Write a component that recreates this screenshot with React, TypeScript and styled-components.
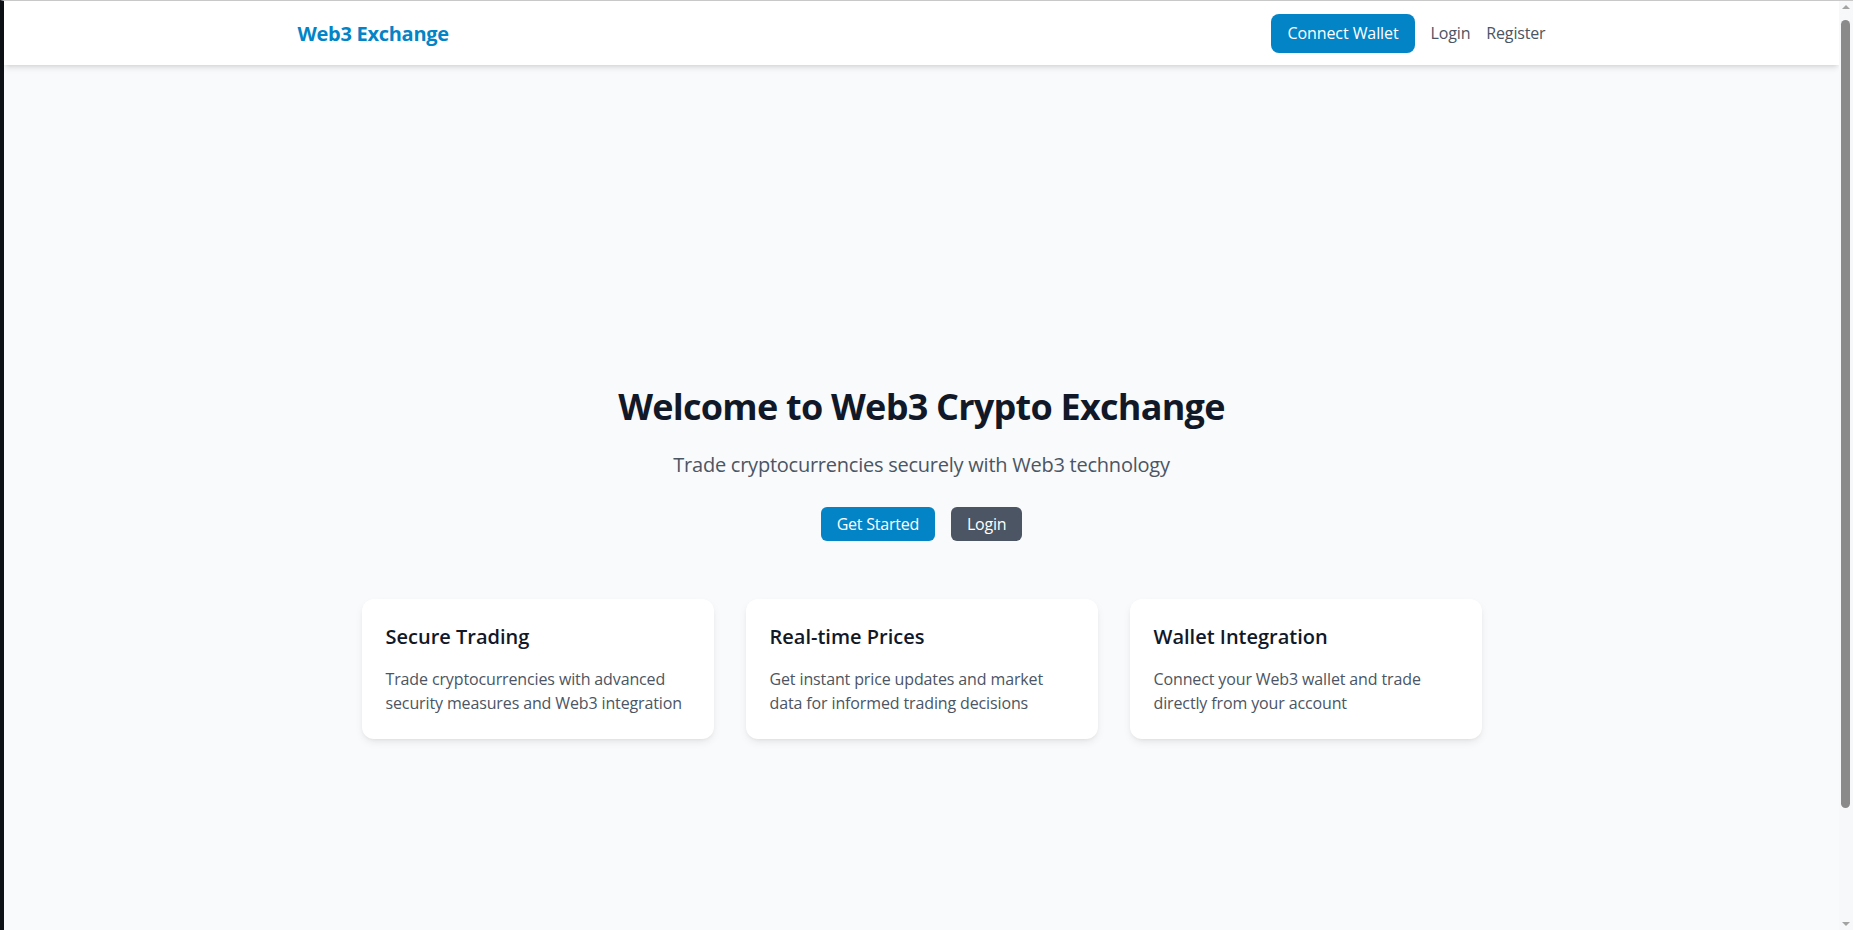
import React from "react";
import styled, { createGlobalStyle } from "styled-components";

const GlobalStyle = createGlobalStyle`
  *, *::before, *::after { box-sizing: border-box; }
  html, body { margin: 0; padding: 0; }
  body {
    background: #f9fafb;
    font-family: "Open Sans", "Noto Sans", sans-serif;
    color: #111827;
    -webkit-font-smoothing: antialiased;
  }
`;

const Frame = styled.div`
  min-height: 100vh;
  border-left: 4px solid #0e1116;
  border-top: 1px solid #c9c9c9;
  padding-right: 14px;
  background: #f9fafb;
`;

const Header = styled.header`
  position: relative;
  z-index: 1;
  height: 64px;
  background: #ffffff;
  box-shadow: 0 4px 6px -1px rgba(0, 0, 0, 0.1), 0 2px 4px -2px rgba(0, 0, 0, 0.1);
`;

const HeaderInner = styled.div`
  max-width: 1280px;
  height: 100%;
  margin: 0 auto;
  padding: 0 16px;
  display: flex;
  align-items: center;
  justify-content: space-between;
`;

const Logo = styled.a`
  font-size: 20px;
  font-weight: 700;
  letter-spacing: -0.014em;
  color: #0284c7;
  text-decoration: none;
`;

const Nav = styled.nav`
  display: flex;
  align-items: center;
  gap: 16px;
`;

const NavLink = styled.a`
  font-size: 16px;
  line-height: 19px;
  letter-spacing: -0.01em;
  color: #4b5563;
  text-decoration: none;
`;

const Button = styled.button<{ $variant?: "primary" | "dark"; $size?: "md" | "lg" }>`
  border: none;
  cursor: pointer;
  font-family: inherit;
  font-size: 16px;
  letter-spacing: ${(p) => (p.$size === "lg" ? "-0.005em" : "-0.015em")};
  color: #ffffff;
  background: ${(p) => (p.$variant === "dark" ? "#4b5563" : "#0284c7")};
  padding: ${(p) => (p.$size === "lg" ? "10px 16px" : "8px 16px")};
  line-height: ${(p) => (p.$size === "lg" ? "19px" : "18px")};
  border-radius: ${(p) => (p.$size === "lg" ? "8px" : "6px")};
`;

const Main = styled.main`
  min-height: calc(100vh + 66px);
  padding: 0 16px;
  display: flex;
  flex-direction: column;
  align-items: center;
  justify-content: center;
`;

const Hero = styled.section`
  width: 100%;
  display: flex;
  flex-direction: column;
  align-items: center;
  text-align: center;
`;

const Title = styled.h1`
  margin: 0 0 24px;
  font-size: 36px;
  line-height: 40px;
  font-weight: 700;
  letter-spacing: -0.021em;
  color: #111827;
`;

const Subtitle = styled.p`
  margin: 0 0 28px;
  font-size: 20px;
  line-height: 28px;
  letter-spacing: -0.012em;
  color: #4b5563;
`;

const Actions = styled.div`
  display: flex;
  justify-content: center;
  gap: 16px;
`;

const Features = styled.div`
  width: 100%;
  max-width: 1152px;
  margin-top: 58px;
  padding: 0 16px;
  display: grid;
  grid-template-columns: repeat(3, 1fr);
  gap: 32px;
`;

const Card = styled.div`
  background: #ffffff;
  border-radius: 12px;
  padding: 24px;
  text-align: left;
  box-shadow: 0 4px 8px -1px rgba(0, 0, 0, 0.08), 0 2px 4px -2px rgba(0, 0, 0, 0.08);
`;

const CardTitle = styled.h3`
  margin: 0 0 16px;
  font-size: 20px;
  line-height: 28px;
  font-weight: 600;
  color: #111827;
`;

const CardText = styled.p`
  margin: 0;
  font-size: 16px;
  line-height: 24px;
  letter-spacing: -0.008em;
  color: #4b5563;
`;

const Scrollbar = styled.div`
  position: fixed;
  top: 1px;
  right: 0;
  width: 14px;
  height: calc(100vh - 1px);
  background: #f7f8f9;
  z-index: 5;
`;

const Arrow = styled.div<{ $dir: "up" | "down" }>`
  position: absolute;
  left: 3px;
  width: 0;
  height: 0;
  border-left: 4px solid transparent;
  border-right: 4px solid transparent;
  ${(p) =>
    p.$dir === "up"
      ? "top: 4px; border-bottom: 4px solid #a3a3a3;"
      : "bottom: 4px; border-top: 4px solid #a3a3a3;"}
`;

const Thumb = styled.div`
  position: absolute;
  top: 19px;
  left: 2px;
  width: 9px;
  height: 788px;
  border-radius: 5px;
  background: #8a8a8a;
`;

const features = [
  {
    title: "Secure Trading",
    text: "Trade cryptocurrencies with advanced security measures and Web3 integration",
  },
  {
    title: "Real-time Prices",
    text: "Get instant price updates and market data for informed trading decisions",
  },
  {
    title: "Wallet Integration",
    text: "Connect your Web3 wallet and trade directly from your account",
  },
];

export default function App() {
  return (
    <>
      <GlobalStyle />
      <Frame>
        <Header>
          <HeaderInner>
            <Logo href="#">Web3 Exchange</Logo>
            <Nav>
              <Button $size="lg">Connect Wallet</Button>
              <NavLink href="#">Login</NavLink>
              <NavLink href="#">Register</NavLink>
            </Nav>
          </HeaderInner>
        </Header>
        <Main>
          <Hero>
            <Title>Welcome to Web3 Crypto Exchange</Title>
            <Subtitle>Trade cryptocurrencies securely with Web3 technology</Subtitle>
            <Actions>
              <Button>Get Started</Button>
              <Button $variant="dark">Login</Button>
            </Actions>
            <Features>
              {features.map((f) => (
                <Card key={f.title}>
                  <CardTitle>{f.title}</CardTitle>
                  <CardText>{f.text}</CardText>
                </Card>
              ))}
            </Features>
          </Hero>
        </Main>
      </Frame>
      <Scrollbar>
        <Arrow $dir="up" />
        <Thumb />
        <Arrow $dir="down" />
      </Scrollbar>
    </>
  );
}
